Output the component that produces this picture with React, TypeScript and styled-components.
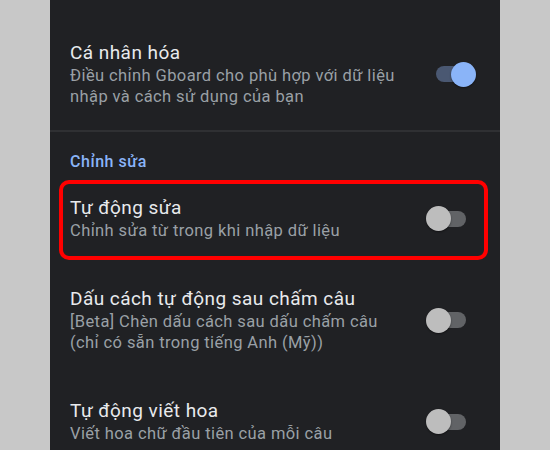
import React from "react";
import styled, { createGlobalStyle } from "styled-components";

const GlobalStyle = createGlobalStyle`
  html, body {
    margin: 0;
    padding: 0;
    background: #c8c8c8;
  }
  body {
    font-family: Roboto, "Noto Sans", "Liberation Sans", sans-serif;
  }
`;

const Panel = styled.div`
  width: 450px;
  height: 450px;
  margin: 0 auto;
  background: #202124;
  overflow: hidden;
  padding-top: 18px;
  box-sizing: border-box;
`;

const Row = styled.div<{ $divider?: boolean; $on?: boolean }>`
  position: relative;
  display: flex;
  align-items: center;
  justify-content: space-between;
  padding: 23px ${(p) => (p.$on ? "28px" : "34px")} 23px 20px;
  border-bottom: ${(p) => (p.$divider ? "2px solid #2f3033" : "none")};
`;

const TextBlock = styled.div`
  max-width: 335px;
`;

const Title = styled.div`
  font-size: 19px;
  letter-spacing: 0.45px;
  line-height: 24px;
  color: #e8eaed;
`;

const Sub = styled.div`
  font-size: 16.5px;
  letter-spacing: 0.4px;
  line-height: 21px;
  color: #9aa0a6;
`;

const SectionHeader = styled.div`
  padding: 20px 20px 1px;
  font-size: 16px;
  letter-spacing: 0.55px;
  line-height: 20px;
  font-weight: 500;
  color: #8ab4f8;
`;

const Track = styled.span<{ $on?: boolean }>`
  position: relative;
  flex: none;
  width: 36px;
  height: 16px;
  border-radius: 8px;
  background: ${(p) => (p.$on ? "#4a5872" : "#616366")};
`;

const Thumb = styled.span<{ $on?: boolean }>`
  position: absolute;
  top: -4.5px;
  ${(p) => (p.$on ? "right: -4px;" : "left: -4px;")}
  width: 25px;
  height: 25px;
  border-radius: 50%;
  background: ${(p) => (p.$on ? "#8ab4f8" : "#bdbdbd")};
  box-shadow: 0 1px 2px rgba(0, 0, 0, 0.45);
`;

// red frame drawn over the "Tự động sửa" row
const Highlight = styled.span`
  position: absolute;
  top: 7px;
  bottom: 4px;
  left: 9px;
  right: 12px;
  border: 4.5px solid #ff0000;
  border-radius: 10px;
  pointer-events: none;
`;

function Toggle({ on }: { on?: boolean }) {
  return (
    <Track $on={on}>
      <Thumb $on={on} />
    </Track>
  );
}

type Setting = {
  title: string;
  sub: string;
  on?: boolean;
  highlight?: boolean;
};

const editing: Setting[] = [
  {
    title: "Tự động sửa",
    sub: "Chỉnh sửa từ trong khi nhập dữ liệu",
    highlight: true,
  },
  {
    title: "Dấu cách tự động sau chấm câu",
    sub: "[Beta] Chèn dấu cách sau dấu chấm câu (chỉ có sẵn trong tiếng Anh (Mỹ))",
  },
  {
    title: "Tự động viết hoa",
    sub: "Viết hoa chữ đầu tiên của mỗi câu",
  },
];

export default function App() {
  return (
    <>
      <GlobalStyle />
      <Panel>
        <Row $divider $on>
          <TextBlock>
            <Title>Cá nhân hóa</Title>
            <Sub>Điều chỉnh Gboard cho phù hợp với dữ liệu nhập và cách sử dụng của bạn</Sub>
          </TextBlock>
          <Toggle on />
        </Row>
        <SectionHeader>Chỉnh sửa</SectionHeader>
        {editing.map((s, i) => (
          <Row key={i} $on={s.on}>
            {s.highlight && <Highlight />}
            <TextBlock>
              <Title>{s.title}</Title>
              <Sub>{s.sub}</Sub>
            </TextBlock>
            <Toggle on={s.on} />
          </Row>
        ))}
      </Panel>
    </>
  );
}
